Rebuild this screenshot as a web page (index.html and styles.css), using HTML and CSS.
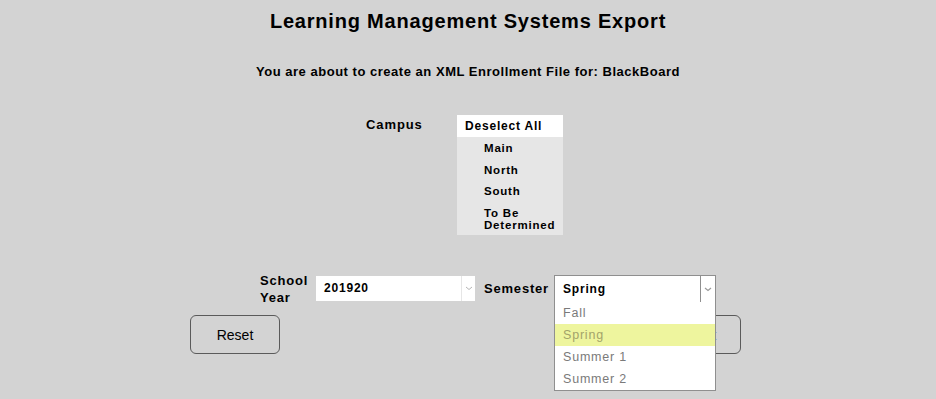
FILE: index.html
```html
<!DOCTYPE html>
<html>
<head>
<meta charset="utf-8">
<link rel="stylesheet" href="styles.css">
</head>
<body>
<div class="page">
  <h1 class="title">Learning Management Systems Export</h1>
  <p class="subtitle">You are about to create an XML Enrollment File for: BlackBoard</p>
  <div class="form">
    <div class="campus-row">
      <div class="campus-label">Campus</div>
      <div class="campus-list">
        <div class="deselect">Deselect All</div>
        <div class="campus-item">Main</div>
        <div class="campus-item">North</div>
        <div class="campus-item">South</div>
        <div class="campus-item">To Be<br>Determined</div>
      </div>
    </div>
    <div class="select-row">
      <div class="year-label">School<br>Year</div>
      <div class="select year-select">
        <span class="select-value">201920</span>
        <span class="select-arrow"><svg width="8" height="5" viewBox="0 0 8 5"><path d="M1 1 L4 3.5 L7 1" fill="none" stroke="#b5b5b5" stroke-width="1"/></svg></span>
      </div>
      <div class="sem-label">Semester</div>
      <div class="sem-wrap">
        <div class="select sem-select">
          <span class="select-value">Spring</span>
          <span class="select-arrow"><svg width="8" height="5" viewBox="0 0 8 5"><path d="M1 1 L4 3.5 L7 1" fill="none" stroke="#9a9a9a" stroke-width="1.2"/></svg></span>
        </div>
        <div class="dropdown">
          <div class="option">Fall</div>
          <div class="option active">Spring</div>
          <div class="option">Summer 1</div>
          <div class="option">Summer 2</div>
        </div>
      </div>
    </div>
    <div class="button-row">
      <button class="btn">Reset</button>
      <button class="btn">Export</button>
    </div>
  </div>
</div>
</body>
</html>
```
FILE: styles.css
```css
html, body {
  margin: 0;
  padding: 0;
  background: #d3d3d3;
}
body {
  font-family: "Century Gothic", "Liberation Sans", Arial, sans-serif;
  color: #000;
  width: 936px;
  height: 399px;
  overflow: hidden;
  letter-spacing: 0.05em;
}
.page {
  padding-top: 8px;
}
.title {
  margin: 0;
  text-align: center;
  font-size: 20px;
  line-height: 26px;
  font-weight: bold;
  letter-spacing: 0.04em;
}
.subtitle {
  margin: 30px 0 0;
  text-align: center;
  font-size: 13px;
  line-height: 16px;
  font-weight: bold;
  letter-spacing: 0.04em;
}
.form {
  margin-left: 190px;
  width: 551px;
  margin-top: 35px;
}
.campus-row {
  display: flex;
  align-items: flex-start;
}
.campus-label {
  margin-left: 176px;
  width: 91px;
  font-size: 13px;
  font-weight: bold;
  line-height: 16px;
  padding-top: 2px;
  letter-spacing: 0.07em;
}
.campus-list {
  width: 106px;
  background: #e6e6e6;
  font-size: 11.5px;
  font-weight: bold;
}
.deselect {
  background: #fff;
  height: 22px;
  line-height: 22px;
  padding-left: 8px;
  font-size: 12px;
}
.campus-item {
  padding-left: 27px;
  line-height: 12px;
  padding-top: 5px;
  padding-bottom: 4.5px;
}
.select-row {
  display: flex;
  align-items: flex-start;
  margin-top: 40px;
  position: relative;
}
.year-label {
  margin-left: 70px;
  margin-top: -3px;
  width: 56px;
  font-size: 13px;
  font-weight: bold;
  line-height: 17px;
}
.select {
  display: flex;
  align-items: stretch;
  background: #fff;
  box-sizing: border-box;
  font-size: 12px;
  font-weight: bold;
}
.year-select {
  width: 159px;
  height: 25px;
  margin-top: 1px;
}
.select-value {
  flex: 1;
  padding-left: 8px;
  line-height: 25px;
}
.select-arrow {
  width: 13px;
  border-left: 1px solid #e6e6e6;
  display: flex;
  align-items: center;
  justify-content: center;
}
.sem-label {
  margin-left: 9px;
  width: 70px;
  font-size: 13px;
  font-weight: bold;
  line-height: 16px;
  padding-top: 6px;
}
.sem-wrap {
  position: relative;
}
.sem-select {
  width: 162px;
  height: 28px;
  border: 1px solid #8f8f8f;
}
.sem-select .select-value {
  line-height: 26px;
}
.sem-select .select-arrow {
  border-left: 1px solid #8f8f8f;
  width: 14px;
}
.dropdown {
  position: absolute;
  top: 27px;
  left: 0;
  width: 162px;
  box-sizing: border-box;
  border: 1px solid #8f8f8f;
  border-top: none;
  background: #fff;
  z-index: 2;
  font-size: 12.5px;
  color: #7a7a7a;
}
.option {
  height: 22px;
  line-height: 22px;
  padding-left: 8px;
}
.option.active {
  background: #eef59e;
  color: #a3a36a;
}
.button-row {
  display: flex;
  justify-content: space-between;
  margin-top: 9px;
}
.btn {
  width: 90px;
  height: 39px;
  background: transparent;
  border: 1px solid #5a5a5a;
  border-radius: 6px;
  font-family: inherit;
  font-size: 14px;
  color: #000;
  padding: 0;
  letter-spacing: 0;
}
```
